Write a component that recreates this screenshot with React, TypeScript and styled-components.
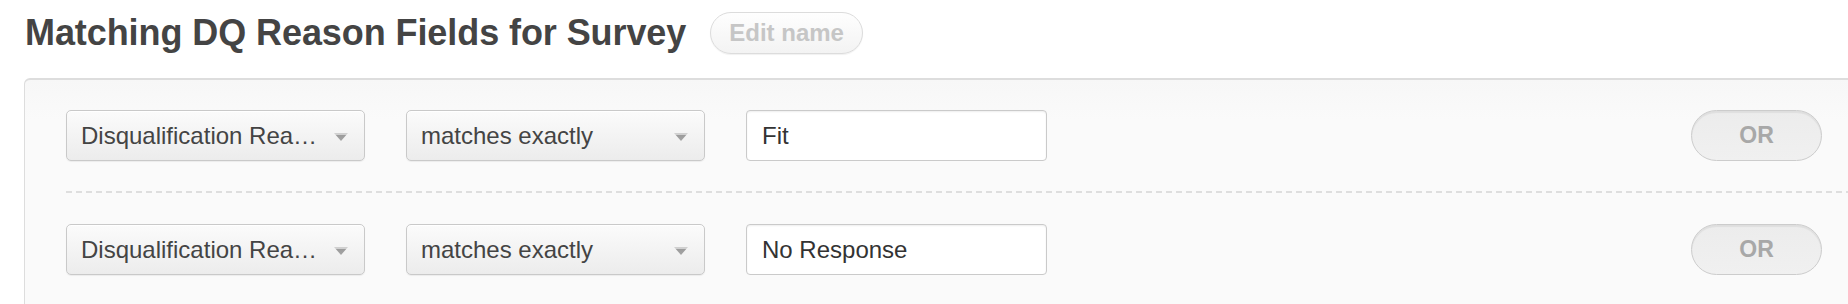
import styled, { createGlobalStyle } from 'styled-components'

const GlobalStyle = createGlobalStyle`
    body {
        margin: 0;
        background: #ffffff;
        overflow: hidden;
        font-family: "Liberation Sans", Arial, Helvetica, sans-serif;
    }
`

interface Condition {
    field: string
    operator: string
    value: string
}

// the field name is already cut short the way the picker shows it
const conditions: Condition[] = [
    { field: 'Disqualification Rea…', operator: 'matches exactly', value: 'Fit' },
    { field: 'Disqualification Rea…', operator: 'matches exactly', value: 'No Response' },
]

function Arrow() {
    return (
        <ArrowIcon width="14" height="8" viewBox="0 0 14 8">
            <defs>
                <linearGradient id="arrowFill" x1="0" y1="0" x2="0" y2="1">
                    <stop offset="0" stopColor="#d0d0d0" />
                    <stop offset="0.3" stopColor="#d0d0d0" />
                    <stop offset="0.31" stopColor="#9c9c9c" />
                    <stop offset="1" stopColor="#a4a4a4" />
                </linearGradient>
            </defs>
            <polygon points="0,0 14,0 7,8" fill="url(#arrowFill)" />
        </ArrowIcon>
    )
}

export default function App() {
    return (
        <Page>
            <GlobalStyle />
            <Header>
                <Title>Matching DQ Reason Fields for Survey</Title>
                <EditButton>Edit name</EditButton>
            </Header>
            <Panel>
                {conditions.map((c, i) => (
                    <div key={i}>
                        {i > 0 && <Divider />}
                        <Row>
                            <Select>
                                <SelectText>{c.field}</SelectText>
                                <Arrow />
                            </Select>
                            <Select>
                                <SelectText>{c.operator}</SelectText>
                                <Arrow />
                            </Select>
                            <ValueInput readOnly value={c.value} />
                            <OrButton>OR</OrButton>
                        </Row>
                    </div>
                ))}
            </Panel>
        </Page>
    )
}

const Page = styled.div`
    padding: 12px 0 0 24px;
`

const Header = styled.div`
    display: flex;
    align-items: center;
    height: 42px;
`

const Title = styled.h1`
    margin: 0 0 0 1px;
    font-size: 36px;
    font-weight: 700;
    line-height: 42px;
    letter-spacing: -0.08px;
    color: #444444;
`

const EditButton = styled.div`
    box-sizing: border-box;
    height: 42px;
    margin-left: 24px;
    padding: 0 18px;
    display: flex;
    align-items: center;
    border: 1px solid #dcdcdc;
    border-radius: 21px;
    background: linear-gradient(#fefefe, #f3f3f3);
    box-shadow: 0 1px 1px rgba(0, 0, 0, 0.06);
    color: #c6c6c6;
    font-size: 24px;
    font-weight: 700;
`

const Panel = styled.div`
    box-sizing: border-box;
    width: 1840px;
    margin-top: 24px;
    padding: 30px 41px 60px;
    border: 1px solid #dddddd;
    border-top-width: 2px;
    border-radius: 6px;
    background: linear-gradient(#f7f7f7, #fafafa 40px);
`

const Row = styled.div`
    display: flex;
    align-items: center;
    gap: 41px;
`

const Divider = styled.div`
    height: 2px;
    margin: 30px -41px 31px 0;
    background: repeating-linear-gradient(to right, #dedede 0 6px, transparent 6px 10px);
`

const Select = styled.div`
    box-sizing: border-box;
    width: 299px;
    height: 51px;
    padding: 0 16px 0 14px;
    display: flex;
    align-items: center;
    justify-content: space-between;
    border: 1px solid #c9c9c9;
    border-radius: 5px;
    background: linear-gradient(#fbfbfb, #ececec);
    box-shadow: 0 1px 1px rgba(0, 0, 0, 0.06), inset 0 1px 0 #ffffff;
`

const SelectText = styled.span`
    white-space: nowrap;
    font-size: 24px;
    color: #444444;
`

const ArrowIcon = styled.svg`
    flex: none;
    margin-top: 2px;
`

const ValueInput = styled.input`
    box-sizing: border-box;
    width: 301px;
    height: 51px;
    padding: 0 15px;
    border: 1px solid #cacaca;
    border-radius: 4px;
    background: #ffffff;
    box-shadow: inset 0 1px 2px rgba(0, 0, 0, 0.07);
    font-family: "Liberation Sans", Arial, Helvetica, sans-serif;
    font-size: 24px;
    color: #333333;
    outline: none;
`

const OrButton = styled.div`
    box-sizing: border-box;
    width: 131px;
    height: 51px;
    margin-left: auto;
    display: flex;
    align-items: center;
    justify-content: center;
    border: 1px solid #cccccc;
    border-radius: 26px;
    background: linear-gradient(#ececec, #f0f0f0);
    box-shadow: inset 0 2px 1px rgba(0, 0, 0, 0.06);
    color: #a8a8a8;
    font-size: 23px;
    font-weight: 700;
`
